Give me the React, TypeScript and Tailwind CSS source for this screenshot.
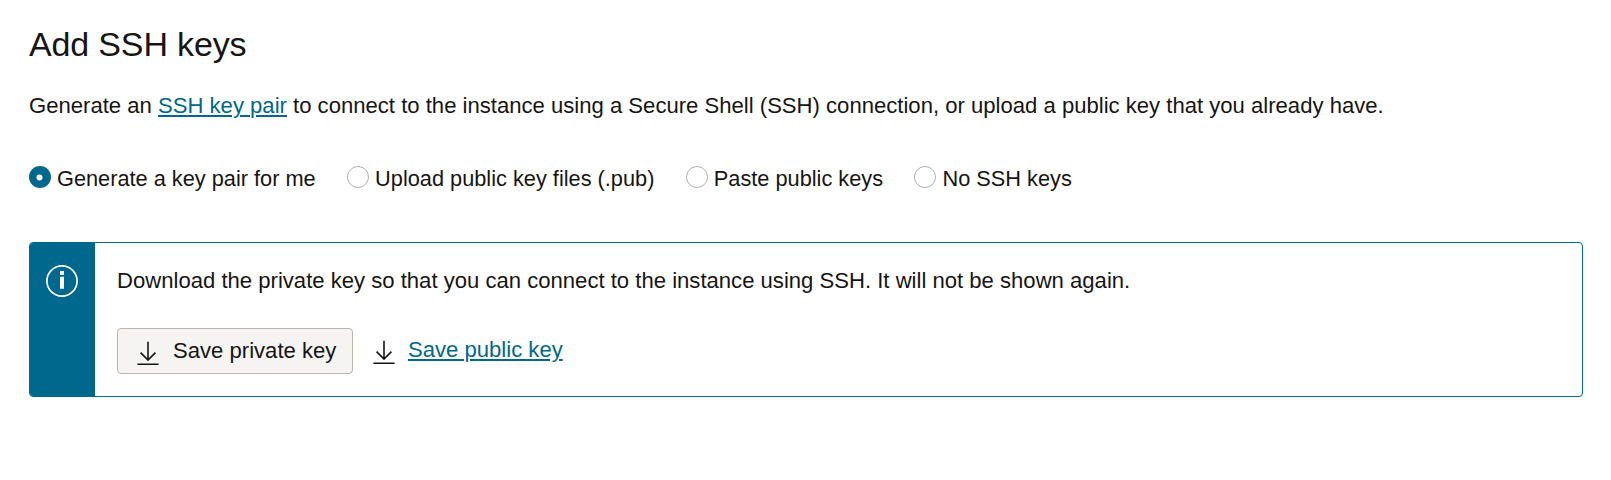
const link = "text-[#00688c] underline decoration-[2px] underline-offset-[2px]";

function Radio({ label, checked = false }: { label: string; checked?: boolean }) {
  return (
    <label className="flex items-start whitespace-nowrap">
      <svg className="mr-1.5 mt-[2px] shrink-0" width="22" height="22" viewBox="0 0 22 22">
        {checked ? (
          <>
            <circle cx="11" cy="11" r="11" fill="#00688c" />
            <circle cx="10.5" cy="11.4" r="3" fill="#fff" />
          </>
        ) : (
          <circle cx="11" cy="11" r="10.5" fill="#fff" stroke="#b5aea8" strokeWidth="1" />
        )}
      </svg>
      {label}
    </label>
  );
}

function Download({ className = "" }: { className?: string }) {
  return (
    <svg className={"shrink-0 " + className} width="22" height="25" viewBox="0 0 22 25" fill="none" stroke="#161513" strokeWidth="1.6">
      <path d="M11 0.7v18.3M3.6 11.6l7.4 7.4 7.4-7.4M0.4 23.3h21.2" />
    </svg>
  );
}

export default function App() {
  return (
    <main className="h-[480px] bg-white pl-[29px] pr-[28px] pt-6 font-['Liberation_Sans',Arial,sans-serif] text-[22.1px] leading-[30px] text-[#161513]">
      <h1 className="text-[34px] leading-10 tracking-[-0.15px]">Add SSH keys</h1>
      <p className="mt-[27px] whitespace-nowrap">
        Generate an <a className={link}>SSH key pair</a> to connect to the instance using a Secure Shell (SSH) connection, or upload a public key that you already have.
      </p>
      <div className="mt-[43px] flex gap-[31.4px] text-[21.75px]">
        <Radio label="Generate a key pair for me" checked />
        <Radio label="Upload public key files (.pub)" />
        <Radio label="Paste public keys" />
        <Radio label="No SSH keys" />
      </div>
      <section className="mt-12 flex h-[155px] overflow-hidden rounded-[4px] border border-[#00688c]">
        <div className="w-[65px] shrink-0 bg-[#00688c] pl-4 pt-[22px]">
          <svg width="32" height="32" viewBox="0 0 32 32" fill="none" stroke="#fff">
            <circle cx="16" cy="16" r="15.1" strokeWidth="1.7" />
            <path d="M16 6v4M16 11.8v12" strokeWidth="4" />
          </svg>
        </div>
        <div className="pl-[22px] pt-[23px]">
          <p>Download the private key so that you can connect to the instance using SSH. It will not be shown again.</p>
          <div className="mt-8 flex">
            <button className="flex h-[46px] w-[236px] items-center rounded-[4px] border border-[#bbb5b0] bg-[#f5f4f2] pl-[19px]">
              <Download className="mt-[5px]" />
              <span className="ml-3.5 whitespace-nowrap">Save private key</span>
            </button>
            <a className="ml-5 flex h-11 items-center">
              <Download className="mt-[5px]" />
              <span className={"ml-[13px] " + link}>Save public key</span>
            </a>
          </div>
        </div>
      </section>
    </main>
  );
}
